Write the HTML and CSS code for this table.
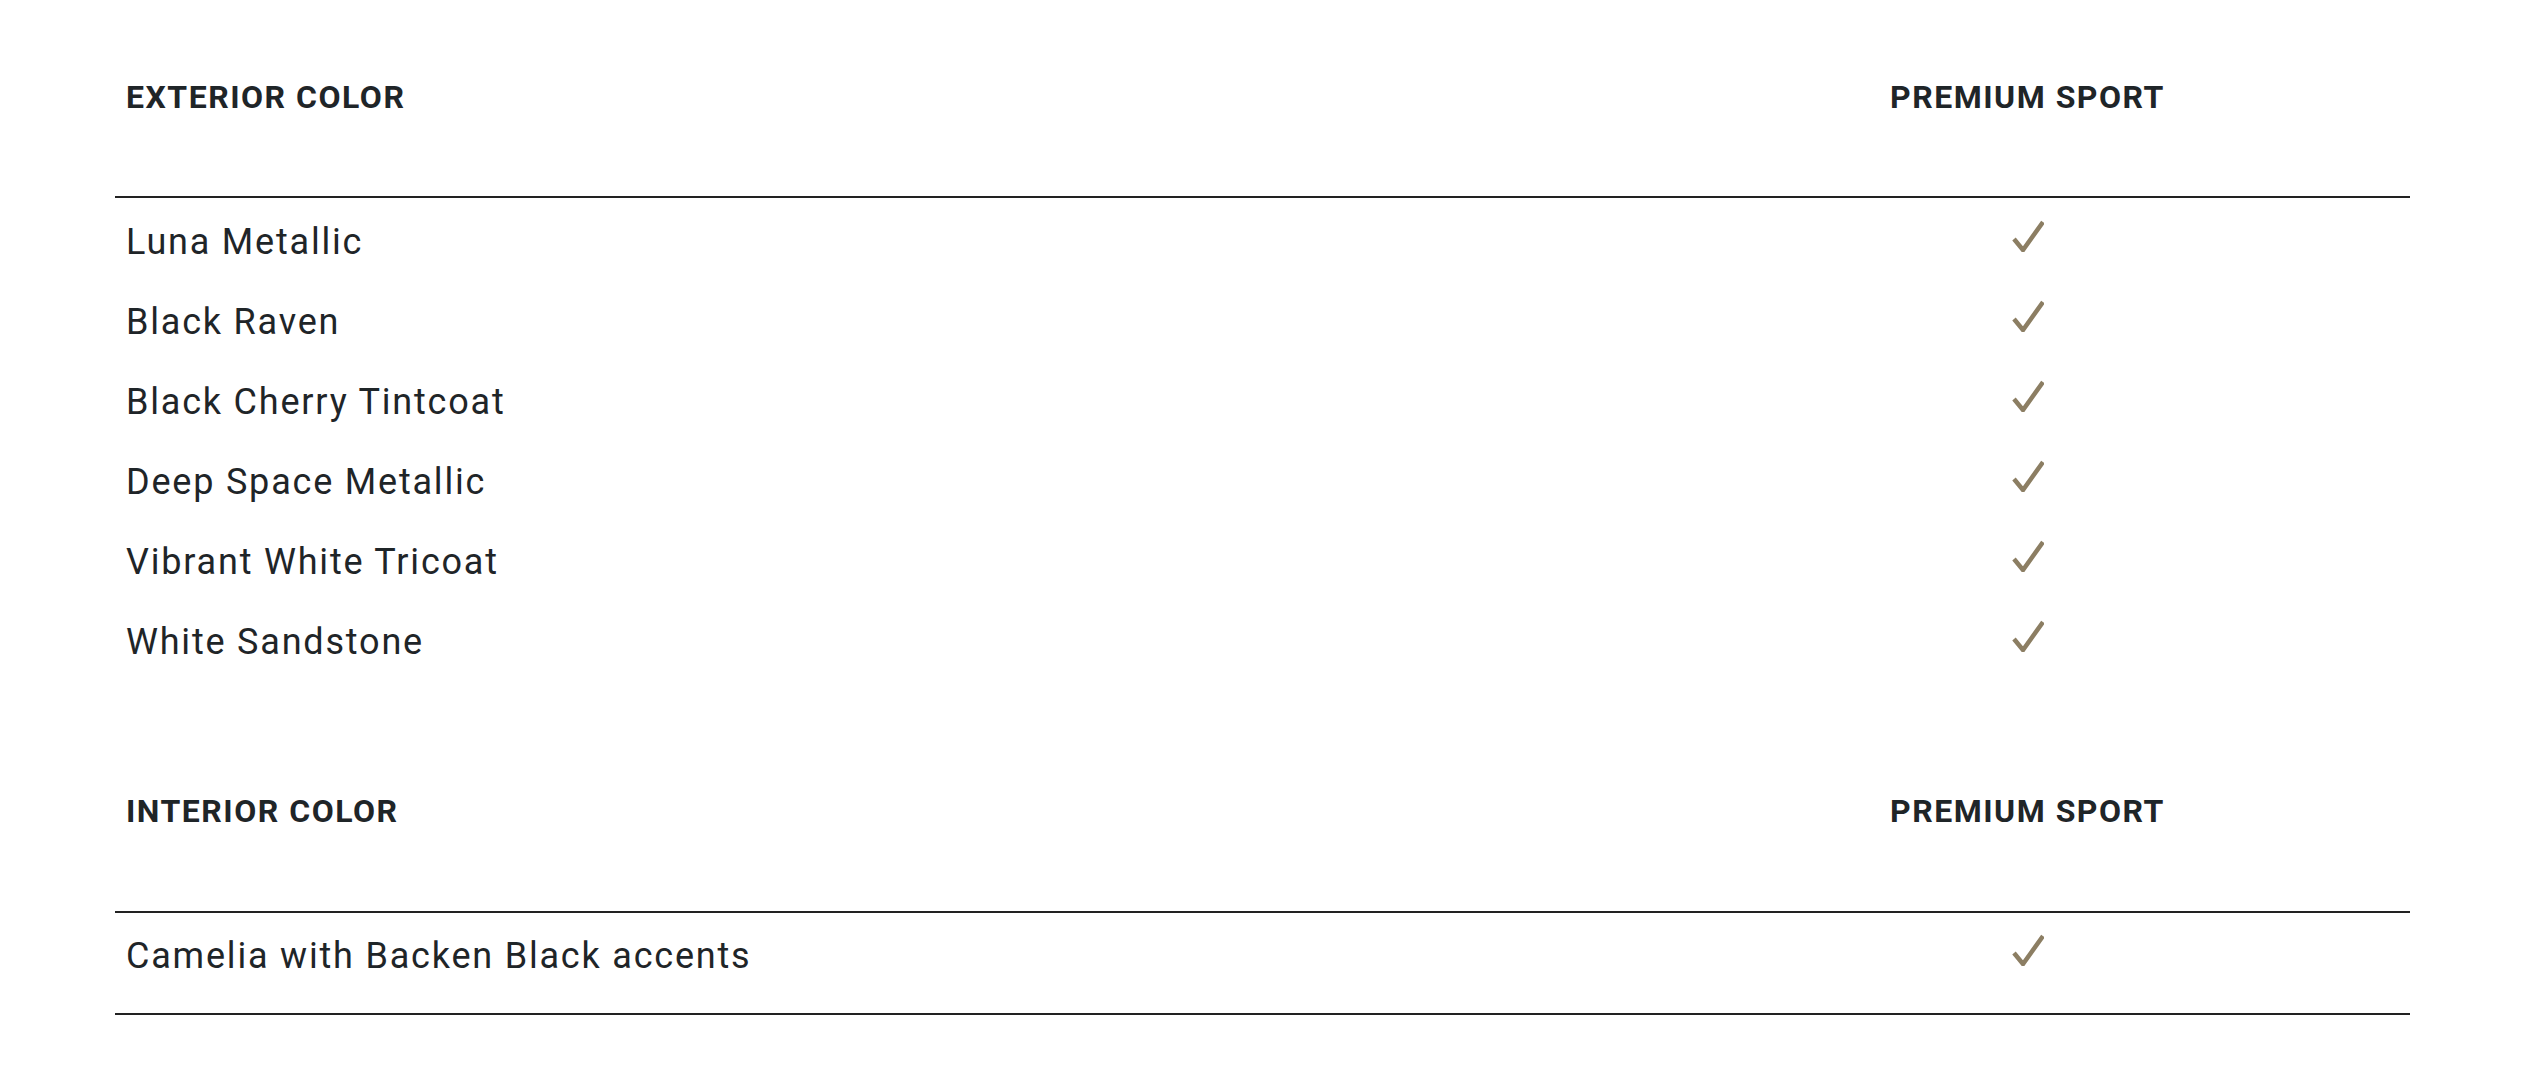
FILE: index.html
```html
<!DOCTYPE html>
<html lang="en">
<head>
<meta charset="utf-8">
<title>Colors</title>
<link rel="stylesheet" href="styles.css">
</head>
<body>
<main class="specs">
  <section class="spec-section">
    <div class="spec-head">
      <div class="head-label">EXTERIOR COLOR</div>
      <div class="head-trim">PREMIUM SPORT</div>
    </div>
    <div class="spec-body">
      <div class="spec-row"><div class="row-label">Luna Metallic</div><div class="row-check"><svg viewBox="0 0 32 32" width="32" height="32"><polyline points="2,19 11,30 31,2" /></svg></div></div>
      <div class="spec-row"><div class="row-label">Black Raven</div><div class="row-check"><svg viewBox="0 0 32 32" width="32" height="32"><polyline points="2,19 11,30 31,2" /></svg></div></div>
      <div class="spec-row"><div class="row-label">Black Cherry Tintcoat</div><div class="row-check"><svg viewBox="0 0 32 32" width="32" height="32"><polyline points="2,19 11,30 31,2" /></svg></div></div>
      <div class="spec-row"><div class="row-label">Deep Space Metallic</div><div class="row-check"><svg viewBox="0 0 32 32" width="32" height="32"><polyline points="2,19 11,30 31,2" /></svg></div></div>
      <div class="spec-row"><div class="row-label">Vibrant White Tricoat</div><div class="row-check"><svg viewBox="0 0 32 32" width="32" height="32"><polyline points="2,19 11,30 31,2" /></svg></div></div>
      <div class="spec-row"><div class="row-label">White Sandstone</div><div class="row-check"><svg viewBox="0 0 32 32" width="32" height="32"><polyline points="2,19 11,30 31,2" /></svg></div></div>
    </div>
  </section>
  <section class="spec-section spec-section--next">
    <div class="spec-head">
      <div class="head-label">INTERIOR COLOR</div>
      <div class="head-trim">PREMIUM SPORT</div>
    </div>
    <div class="spec-body spec-body--last">
      <div class="spec-row"><div class="row-label">Camelia with Backen Black accents</div><div class="row-check"><svg viewBox="0 0 32 32" width="32" height="32"><polyline points="2,19 11,30 31,2" /></svg></div></div>
    </div>
  </section>
</main>
</body>
</html>
```
FILE: styles.css
```css
html, body {
  margin: 0;
  padding: 0;
  background: #ffffff;
}

body {
  font-family: Roboto, "Liberation Sans", sans-serif;
  color: #1f2528;
}

.specs {
  width: 2295px;
  margin-left: 115px;
}

.spec-head {
  display: grid;
  grid-template-columns: 2fr 1fr;
  padding: 77px 0 79px;
  border-bottom: 2px solid #222222;
  font-size: 32px;
  line-height: 40px;
  font-weight: 700;
  letter-spacing: 1.5px;
}

.spec-section--next .spec-head {
  padding-top: 93px;
  padding-bottom: 80px;
}

.head-label {
  padding-left: 11px;
}

.head-trim {
  text-align: center;
}

.spec-body {
  padding: 4px 0 16px;
}

.spec-body--last {
  padding: 3px 0 17px;
  border-bottom: 2px solid #222222;
}

.spec-row {
  display: grid;
  grid-template-columns: 2fr 1fr;
  height: 80px;
  font-size: 36px;
  line-height: 80px;
  letter-spacing: 1.8px;
}

.row-label {
  padding-left: 11px;
}

.row-check {
  display: flex;
  justify-content: center;
  align-items: center;
}

.row-check svg {
  margin-bottom: 12px;
  fill: none;
  stroke: #8c7e63;
  stroke-width: 4.5;
  stroke-linecap: butt;
  stroke-linejoin: miter;
}
```
